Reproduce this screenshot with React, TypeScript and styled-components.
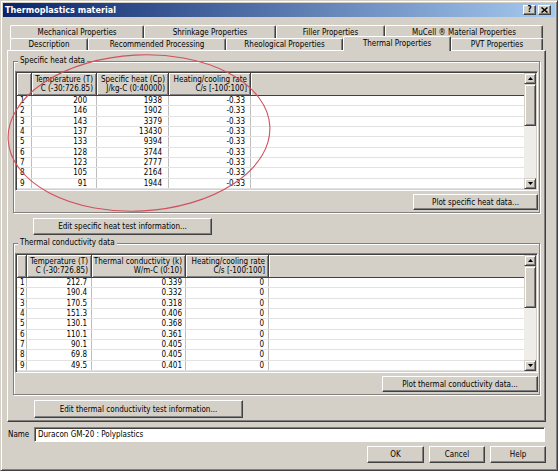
import React from 'react';
import styled, { createGlobalStyle, css } from 'styled-components';

const FONT = `"DejaVu Sans Condensed", "DejaVu Sans", "Liberation Sans", Arial, sans-serif`;

const Global = createGlobalStyle`
  html, body { margin: 0; padding: 0; background: #D4D0C8; }
  body { font-family: ${FONT}; font-stretch: condensed; font-size: 8px; color: #000; }
  * { box-sizing: border-box; }
`;

const Window = styled.div`
  position: relative;
  width: 558px;
  height: 471px;
  background: #D4D0C8;
  border: 1px solid;
  border-color: #D4D0C8 #404040 #404040 #D4D0C8;
  box-shadow: inset 1px 1px 0 #fff, inset -1px -1px 0 #808080;
  padding: 2px;
  display: flex;
  flex-direction: column;
  overflow: hidden;
`;

const TitleBar = styled.div`
  height: 14px;
  flex: 0 0 14px;
  display: flex;
  align-items: center;
  justify-content: space-between;
  padding: 0 4px 0 2px;
  background: linear-gradient(to right, #0A246A, #A6CAF0);
`;

const TitleText = styled.span`
  color: #fff;
  font-weight: bold;
  font-size: 9px;
  line-height: 14px;
`;

const TitleButtons = styled.div`
  display: flex;
  gap: 2px;
`;

const TitleButton = styled.div`
  width: 13px;
  height: 10px;
  background: #D4D0C8;
  border: 1px solid;
  border-color: #fff #404040 #404040 #fff;
  box-shadow: inset -1px -1px 0 #808080;
  display: flex;
  align-items: center;
  justify-content: center;
  font-weight: bold;
  font-size: 8px;
  line-height: 8px;
`;

const Body = styled.div`
  flex: 1;
  display: flex;
  flex-direction: column;
  padding: 8px 9px 0 4px;
`;

const TabStrip = styled.div`
  display: flex;
  flex-direction: column;
  margin: 0 3px;
`;

const TabRow = styled.div<{ $h: number }>`
  display: flex;
  align-items: flex-start;
  height: ${p => p.$h}px;
`;

const Tab = styled.div<{ $w: number; $active?: boolean }>`
  flex: 0 0 ${p => p.$w}px;
  height: 100%;
  display: flex;
  align-items: center;
  justify-content: center;
  background: #D4D0C8;
  border-top: 1px solid #fff;
  border-left: 1px solid #fff;
  border-right: 1px solid #404040;
  box-shadow: inset -1px 0 0 #808080;
  border-radius: 2px 2px 0 0;
  white-space: nowrap;
  ${p =>
    p.$active &&
    css`
      position: relative;
      z-index: 2;
      margin-top: -2px;
      height: calc(100% + 3px);
      padding-bottom: 2px;
    `}
`;

const Page = styled.div`
  height: 372px;
  flex: 0 0 372px;
  display: flex;
  flex-direction: column;
  align-items: stretch;
  border: 1px solid;
  border-color: #fff #404040 #404040 #fff;
  box-shadow: inset -1px -1px 0 #808080;
  padding: 0 5px;
`;

const Group = styled.div<{ $mt: number }>`
  margin-top: ${p => p.$mt}px;
  border: 1px solid #808080;
  box-shadow: inset 1px 1px 0 #fff, 1px 1px 0 #fff;
  padding: 0 1px 2px 1px;
  display: flex;
  flex-direction: column;
`;

const Legend = styled.div`
  align-self: flex-start;
  margin: -6px 0 6px 3px;
  padding: 0 2px;
  line-height: 9px;
  height: 9px;
  background: #D4D0C8;
`;

const TableFrame = styled.div`
  height: 120px;
  flex: 0 0 120px;
  display: flex;
  border: 1px solid;
  border-color: #808080 #fff #fff #808080;
  box-shadow: inset 1px 1px 0 #404040, inset -1px -1px 0 #D4D0C8;
  padding: 1px;
  background: #fff;
`;

const GridArea = styled.div`
  flex: 1;
  display: flex;
  flex-direction: column;
  min-width: 0;
`;

const HeaderRow = styled.div`
  height: 23px;
  flex: 0 0 23px;
  display: flex;
`;

const HeadCell = styled.div<{ $w: number }>`
  flex: 0 0 ${p => p.$w}px;
  background: #D4D0C8;
  box-shadow: inset 1px 1px 0 #fff, inset -1px -1px 0 #808080;
  border-right: 1px solid #404040;
  border-bottom: 1px solid #404040;
  display: flex;
  flex-direction: column;
  justify-content: center;
  align-items: flex-end;
  padding-right: 3px;
  line-height: 9px;
  white-space: nowrap;
`;

const HeadFill = styled.div`
  flex: 1;
  background: #D4D0C8;
  box-shadow: inset 1px 1px 0 #fff;
  border-bottom: 1px solid #404040;
`;

const DataRow = styled.div`
  height: 10.33px;
  flex: 0 0 10.33px;
  display: flex;
  border-bottom: 1px solid #E2E2E2;
`;

const RowNum = styled.div<{ $w: number }>`
  flex: 0 0 ${p => p.$w}px;
  border-right: 1px solid #BEBEBE;
  padding-left: 3px;
  line-height: 9.5px;
`;

const DataCell = styled.div<{ $w: number; $pad: number }>`
  flex: 0 0 ${p => p.$w}px;
  border-right: 1px solid #BEBEBE;
  text-align: right;
  padding-right: ${p => p.$pad}px;
  line-height: 9.5px;
  white-space: nowrap;
`;

const DataFill = styled.div`
  flex: 1;
`;

const ScrollBar = styled.div`
  flex: 0 0 12px;
  display: flex;
  flex-direction: column;
  background: #EEEDEA;
`;

const ScrollButton = styled.div<{ $h: number }>`
  flex: 0 0 ${p => p.$h}px;
  background: #D4D0C8;
  border: 1px solid;
  border-color: #D4D0C8 #404040 #404040 #D4D0C8;
  box-shadow: inset 1px 1px 0 #fff, inset -1px -1px 0 #808080;
  display: flex;
  align-items: center;
  justify-content: center;
`;

const ScrollTrack = styled.div`
  flex: 1;
`;

const ButtonRow = styled.div`
  display: flex;
  justify-content: flex-end;
  margin-top: 3px;
`;

const Button = styled.button<{ $w: number; $h: number; $ml?: number; $mt?: number }>`
  width: ${p => p.$w}px;
  height: ${p => p.$h}px;
  margin: ${p => p.$mt ?? 0}px 0 0 ${p => p.$ml ?? 0}px;
  padding: 0;
  background: #D4D0C8;
  border: 1px solid;
  border-color: #fff #404040 #404040 #fff;
  box-shadow: inset -1px -1px 0 #808080;
  font-family: ${FONT};
  font-stretch: condensed;
  font-size: 8px;
  color: #000;
  flex: 0 0 auto;
  align-self: flex-start;
`;

const NameRow = styled.div`
  display: flex;
  align-items: center;
  height: 15px;
  margin-top: 5px;
`;

const NameLabel = styled.span`
  flex: 0 0 27px;
  padding-left: 1px;
`;

const NameInput = styled.div`
  flex: 1;
  height: 15px;
  margin-right: 1px;
  background: #fff;
  border: 1px solid;
  border-color: #808080 #fff #fff #808080;
  box-shadow: inset 1px 1px 0 #404040;
  padding-left: 3px;
  line-height: 13px;
`;

const DialogButtons = styled.div`
  display: flex;
  justify-content: flex-end;
  gap: 5px;
  margin-top: 4px;
`;

const Annotation = styled.svg`
  position: absolute;
  left: 0;
  top: 0;
  pointer-events: none;
`;

const Arrow = ({ down }: { down?: boolean }) => (
  <svg width="5" height="3" viewBox="0 0 5 3">
    <polygon points={down ? '0,0 5,0 2.5,3' : '0,3 5,3 2.5,0'} fill="#000" />
  </svg>
);

type Col = { w: number; h1: string; h2: string; pad: number };

const DataTable = ({ rnW, cols, rows }: { rnW: number; cols: Col[]; rows: string[][] }) => (
  <TableFrame>
    <GridArea>
      <HeaderRow>
        <HeadCell $w={rnW} />
        {cols.map(c => (
          <HeadCell key={c.h1} $w={c.w}>
            <span>{c.h1}</span>
            <span>{c.h2}</span>
          </HeadCell>
        ))}
        <HeadFill />
      </HeaderRow>
      {rows.map((r, i) => (
        <DataRow key={i}>
          <RowNum $w={rnW}>{i + 1}</RowNum>
          {r.map((v, j) => (
            <DataCell key={j} $w={cols[j].w} $pad={cols[j].pad}>
              {v}
            </DataCell>
          ))}
          <DataFill />
        </DataRow>
      ))}
    </GridArea>
    <ScrollBar>
      <ScrollButton $h={11}>
        <Arrow />
      </ScrollButton>
      <ScrollButton $h={42} />
      <ScrollTrack />
      <ScrollButton $h={11}>
        <Arrow down />
      </ScrollButton>
    </ScrollBar>
  </TableFrame>
);

const heatCols: Col[] = [
  { w: 65, h1: 'Temperature (T)', h2: 'C (-30:726.85)', pad: 9 },
  { w: 72, h1: 'Specific heat (Cp)', h2: 'J/kg-C (0:40000)', pad: 6 },
  { w: 82, h1: 'Heating/cooling rate', h2: 'C/s [-100:100]', pad: 5 },
];

const heatRows = [
  ['200', '1938', '-0.33'],
  ['146', '1902', '-0.33'],
  ['143', '3379', '-0.33'],
  ['137', '13430', '-0.33'],
  ['133', '9394', '-0.33'],
  ['128', '3744', '-0.33'],
  ['123', '2777', '-0.33'],
  ['105', '2164', '-0.33'],
  ['91', '1944', '-0.33'],
];

const condCols: Col[] = [
  { w: 65, h1: 'Temperature (T)', h2: 'C (-30:726.85)', pad: 4 },
  { w: 94, h1: 'Thermal conductivity (k)', h2: 'W/m-C (0:10)', pad: 3 },
  { w: 83, h1: 'Heating/cooling rate', h2: 'C/s [-100:100]', pad: 4 },
];

const condRows = [
  ['212.7', '0.339', '0'],
  ['190.4', '0.332', '0'],
  ['170.5', '0.318', '0'],
  ['151.3', '0.406', '0'],
  ['130.1', '0.368', '0'],
  ['110.1', '0.361', '0'],
  ['90.1', '0.405', '0'],
  ['69.8', '0.405', '0'],
  ['49.5', '0.401', '0'],
];

const row1 = [
  { label: 'Mechanical Properties', w: 134 },
  { label: 'Shrinkage Properties', w: 132 },
  { label: 'Filler Properties', w: 109 },
  { label: 'MuCell ® Material Properties', w: 158 },
];

const row2 = [
  { label: 'Description', w: 78 },
  { label: 'Recommended Processing', w: 138 },
  { label: 'Rheological Properties', w: 117 },
  { label: 'Thermal Properties', w: 108, active: true },
  { label: 'PVT Properties', w: 92 },
];

export default function App() {
  return (
    <>
      <Global />
      <Window>
        <TitleBar>
          <TitleText>Thermoplastics material</TitleText>
          <TitleButtons>
            <TitleButton>?</TitleButton>
            <TitleButton>
              <svg width="7" height="6" viewBox="0 0 7 6">
                <path d="M0.5 0.5 L6.5 5.5 M6.5 0.5 L0.5 5.5" stroke="#000" strokeWidth="1.5" />
              </svg>
            </TitleButton>
          </TitleButtons>
        </TitleBar>
        <Body>
          <TabStrip>
            <TabRow $h={13}>
              {row1.map(t => (
                <Tab key={t.label} $w={t.w}>
                  {t.label}
                </Tab>
              ))}
            </TabRow>
            <TabRow $h={12}>
              {row2.map(t => (
                <Tab key={t.label} $w={t.w} $active={t.active}>
                  {t.label}
                </Tab>
              ))}
            </TabRow>
          </TabStrip>
          <Page>
            <Group $mt={10}>
              <Legend>Specific heat data</Legend>
              <DataTable rnW={15} cols={heatCols} rows={heatRows} />
              <ButtonRow>
                <Button $w={125} $h={16}>Plot specific heat data...</Button>
              </ButtonRow>
            </Group>
            <Button $w={179} $h={17} $ml={20} $mt={5}>
              Edit specific heat test information...
            </Button>
            <Group $mt={8}>
              <Legend>Thermal conductivity data</Legend>
              <DataTable rnW={10} cols={condCols} rows={condRows} />
              <ButtonRow>
                <Button $w={156} $h={16}>Plot thermal conductivity data...</Button>
              </ButtonRow>
            </Group>
            <Button $w={209} $h={18} $ml={21} $mt={5}>
              Edit thermal conductivity test information...
            </Button>
          </Page>
          <NameRow>
            <NameLabel>Name</NameLabel>
            <NameInput>Duracon GM-20 : Polyplastics</NameInput>
          </NameRow>
          <DialogButtons>
            <Button $w={57} $h={17}>OK</Button>
            <Button $w={56} $h={17}>Cancel</Button>
            <Button $w={56} $h={17}>Help</Button>
          </DialogButtons>
        </Body>
        <Annotation width="558" height="471" viewBox="0 0 558 471">
          <ellipse
            cx="138"
            cy="132"
            rx="131"
            ry="78"
            transform="rotate(-3 138 132)"
            fill="none"
            stroke="#D2505C"
            strokeWidth="1.1"
          />
        </Annotation>
      </Window>
    </>
  );
}
